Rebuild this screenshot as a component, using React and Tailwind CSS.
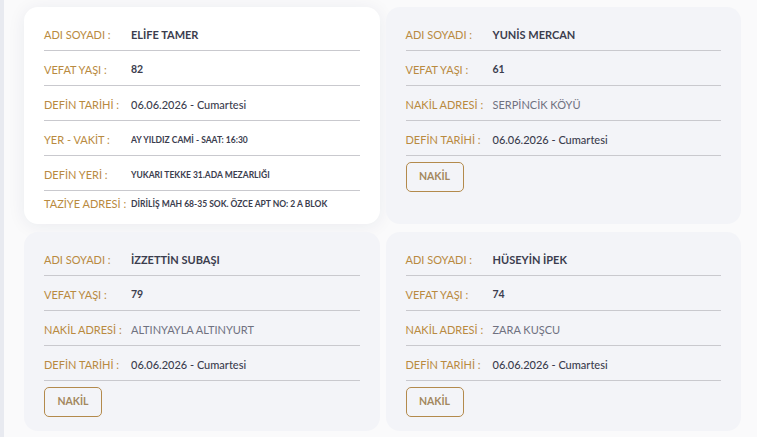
import React from "react";

const cards = [
  {
    active: true,
    rows: [
      { l: "ADI SOYADI :", v: "ELİFE TAMER", t: "name" },
      { l: "VEFAT YAŞI :", v: "82", t: "bold" },
      { l: "DEFİN TARİHİ :", v: "06.06.2026 - Cumartesi", t: "date" },
      { l: "YER - VAKİT :", v: "AY YILDIZ CAMİ - SAAT: 16:30", t: "small" },
      { l: "DEFİN YERİ :", v: "YUKARI TEKKE 31.ADA MEZARLIĞI", t: "small" },
      { l: "TAZİYE ADRESİ :", v: "DİRİLİŞ MAH 68-35 SOK. ÖZCE APT NO: 2 A BLOK", t: "small", last: true },
    ],
  },
  {
    button: true,
    rows: [
      { l: "ADI SOYADI :", v: "YUNİS MERCAN", t: "name" },
      { l: "VEFAT YAŞI :", v: "61", t: "bold" },
      { l: "NAKİL ADRESİ :", v: "SERPİNCİK KÖYÜ", t: "light" },
      { l: "DEFİN TARİHİ :", v: "06.06.2026 - Cumartesi", t: "date" },
    ],
  },
  {
    button: true,
    rows: [
      { l: "ADI SOYADI :", v: "İZZETTİN SUBAŞI", t: "name" },
      { l: "VEFAT YAŞI :", v: "79", t: "bold" },
      { l: "NAKİL ADRESİ :", v: "ALTINYAYLA ALTINYURT", t: "light" },
      { l: "DEFİN TARİHİ :", v: "06.06.2026 - Cumartesi", t: "date" },
    ],
  },
  {
    button: true,
    rows: [
      { l: "ADI SOYADI :", v: "HÜSEYİN İPEK", t: "name" },
      { l: "VEFAT YAŞI :", v: "74", t: "bold" },
      { l: "NAKİL ADRESİ :", v: "ZARA KUŞCU", t: "light" },
      { l: "DEFİN TARİHİ :", v: "06.06.2026 - Cumartesi", t: "date" },
    ],
  },
];

function Value({ t, v }) {
  if (t === "name")
    return <span className="text-[11px] font-bold text-[#3b3d4e]">{v}</span>;
  if (t === "bold")
    return <span className="text-[10.5px] font-bold text-[#3b3d4e]">{v}</span>;
  if (t === "date")
    return <span className="text-[11px] font-medium text-[#3b3d4e]">{v}</span>;
  if (t === "light")
    return <span className="text-[11px] text-[#6f7180]">{v}</span>;
  return <span className="text-[8.5px] font-bold text-[#3b3d4e]">{v}</span>;
}

function Card({ card }) {
  return (
    <div
      className={
        "rounded-[14px] px-[20px] pt-[9px] " +
        (card.active
          ? "bg-white pb-[10px] shadow-[0_2px_18px_rgba(30,40,80,0.07)]"
          : "bg-[#f3f4f8] pb-[14px]")
      }
    >
      {card.rows.map((r, i) => (
        <div
          key={i}
          className={
            "flex items-center " +
            (r.last ? "h-[23px] pt-[3px]" : "h-[35px] pt-[4px] border-b border-[#c9c9ce]")
          }
        >
          <span className="w-[87px] shrink-0 text-[11px] text-[#b98a40]">{r.l}</span>
          <Value t={r.t} v={r.v} />
        </div>
      ))}
      {card.button && (
        <button className="mt-[6px] h-[30px] w-[58px] rounded-[5px] border border-[#b38a4c] text-[10.5px] font-bold text-[#a3885e]">
          NAKİL
        </button>
      )}
    </div>
  );
}

export default function App() {
  return (
    <div
      className="flex h-[437px] w-[757px] overflow-hidden bg-[#fafafb]"
      style={{ fontFamily: "Lato, 'Noto Sans', sans-serif" }}
    >
      <div className="w-[4px] shrink-0 bg-[#e8eaf0]" />
      <div className="pl-[20px] pt-[7px]">
        <div className="grid w-[717px] grid-cols-2 gap-x-[6px] gap-y-[8px]">
          {cards.map((c, i) => (
            <Card key={i} card={c} />
          ))}
        </div>
      </div>
    </div>
  );
}
